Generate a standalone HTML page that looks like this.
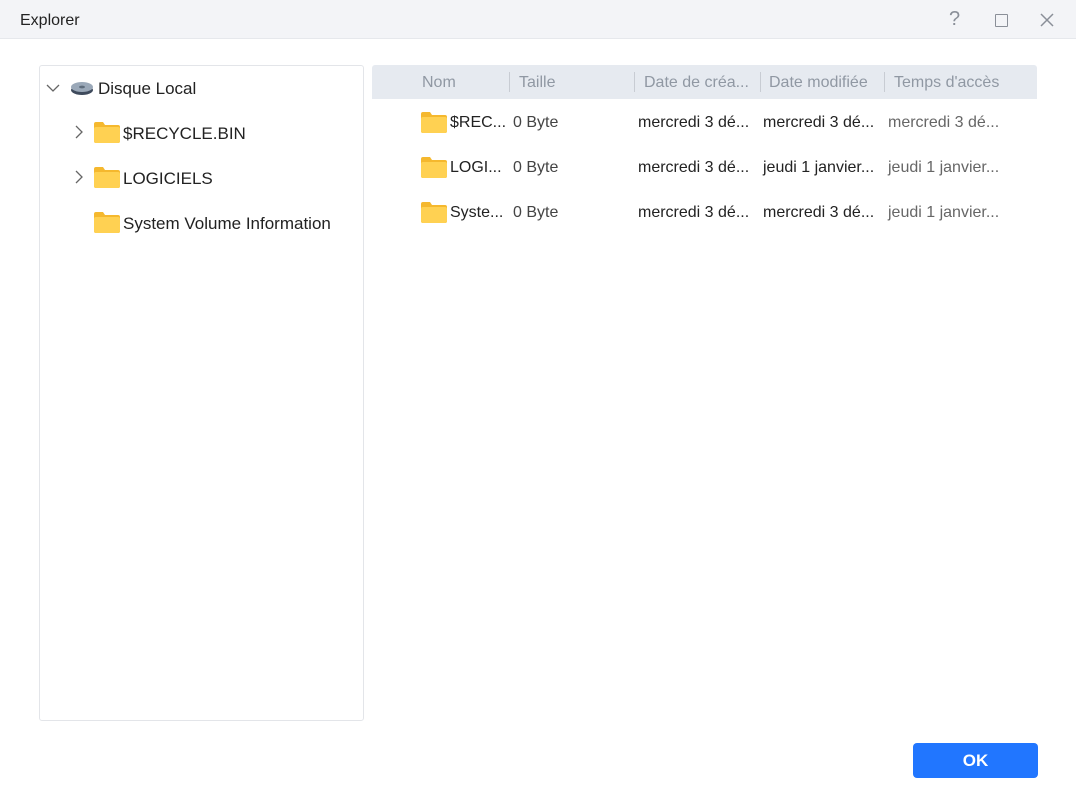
<!DOCTYPE html>
<html><head><style>
*{margin:0;padding:0;box-sizing:border-box}
body{width:1076px;height:800px;background:#fff;font-family:"Liberation Sans",sans-serif;position:relative;overflow:hidden;color:#222}
.a{position:absolute;white-space:nowrap}
.t{font-size:17px;line-height:20px}
.fold{position:absolute;width:26px;height:21px}
</style></head><body>
<div class="a" style="left:0;top:0;width:1076px;height:39px;background:#f3f4f7;border-bottom:1px solid #e6e8ec"></div>
<div class="a" style="left:20px;top:11px;font-size:16px;line-height:20px;color:#222">Explorer</div>
<div class="a" style="left:949px;top:8px;font-size:20px;color:#8a8f98">?</div>
<div class="a" style="left:995px;top:14px;width:13px;height:13px;border:1.5px solid #8a8f98;border-radius:1px"></div>
<svg class="a" style="left:1040px;top:13px" width="14" height="14"><path d="M1 1L13 13M13 1L1 13" stroke="#8a8f98" stroke-width="1.5"/></svg>

<div class="a" style="left:39px;top:65px;width:325px;height:656px;border:1px solid #e3e5e9;border-radius:3px"></div>
<svg class="a" style="left:46px;top:83px" width="14" height="10"><path d="M1 2L7 8L13 2" stroke="#666" stroke-width="1.3" fill="none"/></svg>
<svg class="a" style="left:70px;top:80px" width="24" height="16"><ellipse cx="12" cy="10" rx="11" ry="5" fill="#3e4a5c"/><ellipse cx="12" cy="7" rx="11" ry="5" fill="#9aa8b8"/><ellipse cx="12" cy="7" rx="3" ry="1.4" fill="#5e6c7c"/></svg>
<div class="a t" style="left:98px;top:79px">Disque Local</div>

<svg class="a" style="left:74px;top:125px" width="10" height="14"><path d="M2 1L8 7L2 13" stroke="#666" stroke-width="1.3" fill="none"/></svg>
<svg class="fold" style="left:94px;top:122px" viewBox="0 0 26 21"><path d="M0 2Q0 0 2 0H9L11 3H24Q26 3 26 5V19Q26 21 24 21H2Q0 21 0 19Z" fill="#f5b82e"/><rect x="0" y="5" width="26" height="16" rx="2" fill="#ffd152"/></svg>
<div class="a t" style="left:123px;top:124px">$RECYCLE.BIN</div>

<svg class="a" style="left:74px;top:170px" width="10" height="14"><path d="M2 1L8 7L2 13" stroke="#666" stroke-width="1.3" fill="none"/></svg>
<svg class="fold" style="left:94px;top:167px" viewBox="0 0 26 21"><path d="M0 2Q0 0 2 0H9L11 3H24Q26 3 26 5V19Q26 21 24 21H2Q0 21 0 19Z" fill="#f5b82e"/><rect x="0" y="5" width="26" height="16" rx="2" fill="#ffd152"/></svg>
<div class="a t" style="left:123px;top:169px">LOGICIELS</div>

<svg class="fold" style="left:94px;top:212px" viewBox="0 0 26 21"><path d="M0 2Q0 0 2 0H9L11 3H24Q26 3 26 5V19Q26 21 24 21H2Q0 21 0 19Z" fill="#f5b82e"/><rect x="0" y="5" width="26" height="16" rx="2" fill="#ffd152"/></svg>
<div class="a t" style="left:123px;top:214px">System Volume Information</div>

<div class="a" style="left:372px;top:65px;width:665px;height:34px;background:#e6eaf0;border-radius:3px 3px 0 0"></div>
<div class="a t" style="left:422px;top:73px;color:#9098a3;font-size:16px">Nom</div>
<div class="a" style="left:509px;top:72px;width:1px;height:20px;background:#c8ccd3"></div>
<div class="a t" style="left:519px;top:73px;color:#9098a3;font-size:16px">Taille</div>
<div class="a" style="left:634px;top:72px;width:1px;height:20px;background:#c8ccd3"></div>
<div class="a t" style="left:644px;top:73px;color:#9098a3;font-size:16px">Date de créa...</div>
<div class="a" style="left:760px;top:72px;width:1px;height:20px;background:#c8ccd3"></div>
<div class="a t" style="left:769px;top:73px;color:#9098a3;font-size:16px">Date modifiée</div>
<div class="a" style="left:884px;top:72px;width:1px;height:20px;background:#c8ccd3"></div>
<div class="a t" style="left:894px;top:73px;color:#9098a3;font-size:16px">Temps d'accès</div>

<svg class="fold" style="left:421px;top:112px" viewBox="0 0 26 21"><path d="M0 2Q0 0 2 0H9L11 3H24Q26 3 26 5V19Q26 21 24 21H2Q0 21 0 19Z" fill="#f5b82e"/><rect x="0" y="5" width="26" height="16" rx="2" fill="#ffd152"/></svg>
<div class="a t" style="left:450px;top:113px;font-size:16px">$REC...</div>
<div class="a t" style="left:513px;top:113px;color:#444;font-size:16px">0 Byte</div>
<div class="a t" style="left:638px;top:113px;font-size:16px">mercredi 3 dé...</div>
<div class="a t" style="left:763px;top:113px;font-size:16px">mercredi 3 dé...</div>
<div class="a t" style="left:888px;top:113px;color:#666;font-size:16px">mercredi 3 dé...</div>

<svg class="fold" style="left:421px;top:157px" viewBox="0 0 26 21"><path d="M0 2Q0 0 2 0H9L11 3H24Q26 3 26 5V19Q26 21 24 21H2Q0 21 0 19Z" fill="#f5b82e"/><rect x="0" y="5" width="26" height="16" rx="2" fill="#ffd152"/></svg>
<div class="a t" style="left:450px;top:158px;font-size:16px">LOGI...</div>
<div class="a t" style="left:513px;top:158px;color:#444;font-size:16px">0 Byte</div>
<div class="a t" style="left:638px;top:158px;font-size:16px">mercredi 3 dé...</div>
<div class="a t" style="left:763px;top:158px;font-size:16px">jeudi 1 janvier...</div>
<div class="a t" style="left:888px;top:158px;color:#666;font-size:16px">jeudi 1 janvier...</div>

<svg class="fold" style="left:421px;top:202px" viewBox="0 0 26 21"><path d="M0 2Q0 0 2 0H9L11 3H24Q26 3 26 5V19Q26 21 24 21H2Q0 21 0 19Z" fill="#f5b82e"/><rect x="0" y="5" width="26" height="16" rx="2" fill="#ffd152"/></svg>
<div class="a t" style="left:450px;top:203px;font-size:16px">Syste...</div>
<div class="a t" style="left:513px;top:203px;color:#444;font-size:16px">0 Byte</div>
<div class="a t" style="left:638px;top:203px;font-size:16px">mercredi 3 dé...</div>
<div class="a t" style="left:763px;top:203px;font-size:16px">mercredi 3 dé...</div>
<div class="a t" style="left:888px;top:203px;color:#666;font-size:16px">jeudi 1 janvier...</div>

<div class="a" style="left:913px;top:743px;width:125px;height:35px;background:#2176ff;border-radius:4px;color:#fff;font-size:17px;font-weight:bold;text-align:center;line-height:35px">OK</div>
</body></html>
